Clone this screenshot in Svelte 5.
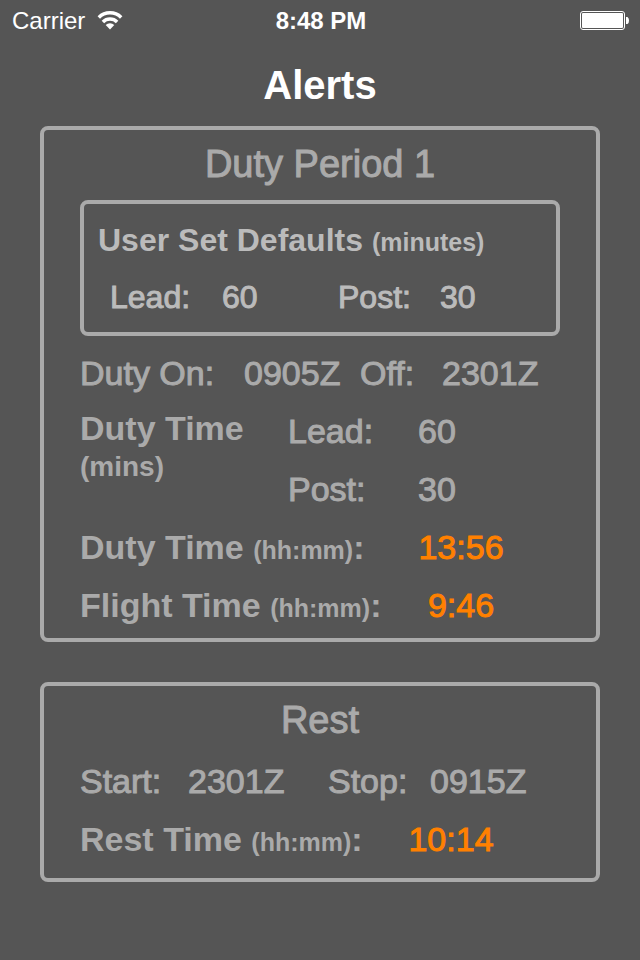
<script>
  const status = { carrier: 'Carrier', time: '8:48 PM' };

  const defaults = { lead: 60, post: 30 };

  const duty = {
    title: 'Duty Period 1',
    on: '0905Z',
    off: '2301Z',
    lead: 60,
    post: 30,
    dutyTime: '13:56',
    flightTime: '9:46'
  };

  const rest = { start: '2301Z', stop: '0915Z', time: '10:14' };
</script>

<header class="status-bar">
  <div class="carrier">
    <span>{status.carrier}</span>
    <svg class="wifi" width="26" height="20" viewBox="0 0 26 20" aria-label="Wi-Fi">
      <path d="M1.8 6.4A16 16 0 0 1 24.2 6.4" />
      <path d="M5.9 10.9A10 10 0 0 1 20.1 10.9" />
      <path class="dot" d="M13 18.5L8.7 14.1A6.2 6.2 0 0 1 17.3 14.1Z" />
    </svg>
  </div>
  <time>{status.time}</time>
  <svg class="battery" width="50" height="20" viewBox="0 0 50 20" aria-label="Battery full">
    <rect class="shell" x="0.5" y="0.5" width="44" height="18" rx="2.5" />
    <rect x="2" y="2" width="41" height="15" rx="1" />
    <path d="M46 6H47.5Q49 7 49 9.5T47.5 13H46Z" />
  </svg>
</header>

<main>
  <h1>Alerts</h1>

  <section class="card">
    <h2>{duty.title}</h2>

    <div class="defaults">
      <h3>User Set Defaults <small>(minutes)</small></h3>
      <div class="defaults-row">
        <span>Lead:</span>
        <span>{defaults.lead}</span>
        <span>Post:</span>
        <span>{defaults.post}</span>
      </div>
    </div>

    <div class="rows">
      <div class="row duty-on">
        <span>Duty On:</span>
        <span>{duty.on}</span>
        <span>Off:</span>
        <span>{duty.off}</span>
      </div>
      <div class="row duty-mins">
        <strong class="mins-label">Duty Time<br /><small>(mins)</small></strong>
        <span>Lead:</span>
        <span>{duty.lead}</span>
        <span>Post:</span>
        <span>{duty.post}</span>
      </div>
      <div class="row total">
        <strong>Duty Time <small>(hh:mm)</small>:</strong>
        <span class="value">{duty.dutyTime}</span>
      </div>
      <div class="row total">
        <strong>Flight Time <small>(hh:mm)</small>:</strong>
        <span class="value">{duty.flightTime}</span>
      </div>
    </div>
  </section>

  <section class="card rest">
    <h2>Rest</h2>
    <div class="rows">
      <div class="row rest-times">
        <span>Start:</span>
        <span>{rest.start}</span>
        <span>Stop:</span>
        <span>{rest.stop}</span>
      </div>
      <div class="row total">
        <strong>Rest Time <small>(hh:mm)</small>:</strong>
        <span class="value">{rest.time}</span>
      </div>
    </div>
  </section>
</main>

<style>
  :global(body) {
    margin: 0;
    background: #555;
    color: #aaa;
    font-family: 'Liberation Sans', Arial, sans-serif;
  }

  .status-bar {
    display: grid;
    grid-template-columns: 1fr auto 1fr;
    align-items: center;
    padding: 0 10px 0 12px;
    color: #fff;
    font-size: 24px;
    line-height: 42px;
  }

  .status-bar time {
    font-weight: bold;
  }

  .carrier {
    display: flex;
    align-items: center;
    gap: 12px;
  }

  .wifi {
    fill: none;
    stroke: #fff;
    stroke-width: 3.5;
  }

  .wifi .dot {
    fill: #fff;
    stroke: none;
  }

  .battery {
    justify-self: end;
    fill: #fff;
  }

  .battery .shell {
    fill: none;
    stroke: #fff;
  }

  main {
    padding: 2px 40px 40px;
  }

  h1,
  h2,
  h3 {
    margin: 0;
  }

  /* medium weight: regular letters with a thin outline */
  h2,
  .defaults-row,
  .row {
    font-weight: normal;
    -webkit-text-stroke: 1px;
  }

  h1 {
    color: #fff;
    font-size: 40px;
    line-height: 82px;
    text-align: center;
  }

  .card {
    padding: 0 36px 6px;
    border: 4px solid #aaa;
    border-radius: 8px;
  }

  .card.rest {
    margin-top: 40px;
    padding-bottom: 12px;
  }

  h2 {
    font-size: 38px;
    line-height: 68px;
    text-align: center;
  }

  .defaults {
    margin: 2px 0 10px;
    padding: 8px 14px 6px;
    border: 4px solid #aaa;
    border-radius: 8px;
    color: #bbb;
    font-size: 32px;
    line-height: 57px;
  }

  h3 {
    font-size: 32px;
  }

  .defaults-row {
    display: grid;
    grid-template-columns: 112px 116px 102px 1fr;
    padding-left: 12px;
  }

  small {
    font-size: 25px;
    line-height: 1;
  }

  .rows {
    display: flex;
    flex-direction: column;
    gap: 4px;
    font-size: 34px;
  }

  .row {
    display: grid;
    line-height: 54px;
  }

  .row strong {
    -webkit-text-stroke: 0;
  }

  .duty-on {
    grid-template-columns: 164px 116px 82px 1fr;
  }

  .duty-mins {
    grid-template-columns: 208px 130px 1fr;
    row-gap: 4px;
  }

  .mins-label {
    grid-row: span 2;
    padding-top: 6px;
    line-height: 36px;
  }

  .mins-label small {
    font-size: 28px;
  }

  .total {
    grid-template-columns: 324px 114px;
  }

  .rest .total {
    grid-template-columns: 314px 114px;
  }

  .rest-times {
    grid-template-columns: 108px 140px 102px 1fr;
  }

  .value {
    color: #ff8000;
    text-align: center;
  }
</style>
